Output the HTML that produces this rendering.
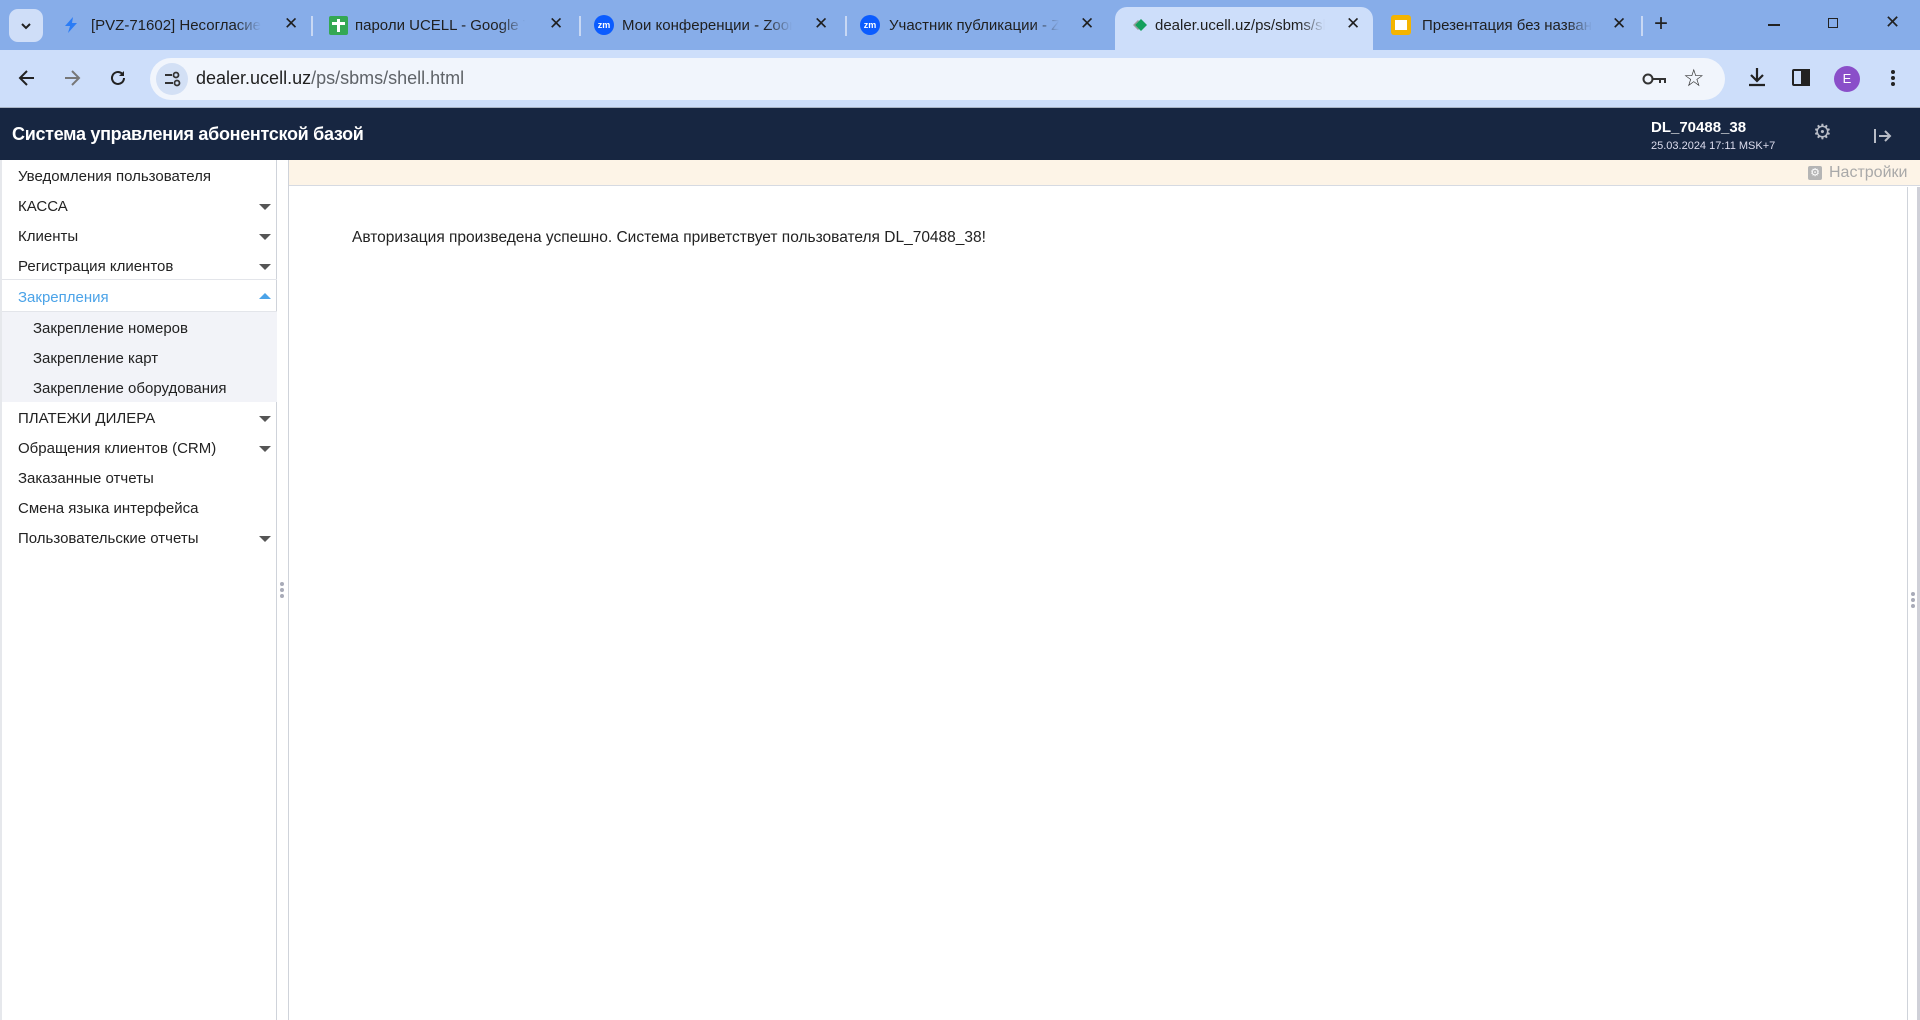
<!DOCTYPE html>
<html><head><meta charset="utf-8">
<style>
*{margin:0;padding:0;box-sizing:border-box}
body{width:1920px;height:1020px;overflow:hidden;background:#fff;font-family:"Liberation Sans","DejaVu Sans",sans-serif;position:relative}
.abs{position:absolute}
#tabbar{left:0;top:0;width:1920px;height:50px;background:#87ade9}
.tab{position:absolute;top:0;height:50px;font-size:15px;color:#1f1f1f;white-space:nowrap}
.tab .t{position:absolute;top:17px;overflow:hidden;width:170px;-webkit-mask-image:linear-gradient(90deg,#000 85%,transparent)}
.tab .x{position:absolute;top:14px;font-size:17px}
.sep{position:absolute;top:16px;width:2px;height:20px;background:#c8d8f4}
#toolbar{left:0;top:50px;width:1920px;height:57px;background:#cddefa}
#addr{left:150px;top:58px;width:1575px;height:42px;border-radius:21px;background:#f1f5fc}
#hdr{left:0;top:108px;width:1920px;height:52px;background:#172641;color:#fff}
#side{left:0;top:160px;width:277px;height:860px;border-right:1px solid #cfd3da;border-left:2px solid #e6e8ec}
.it{position:absolute;left:16px;font-size:15px;color:#222}
.ar{position:absolute;left:257px;width:0;height:0;border-left:6px solid transparent;border-right:6px solid transparent;border-top:6px solid #555}
</style></head><body>
<div id="tabbar" class="abs"></div>
<div class="abs" style="left:9px;top:9px;width:34px;height:33px;border-radius:9px;background:#cfdef8"></div>
<svg class="abs" style="left:19px;top:19px" width="14" height="14"><path d="M3 5l4 4 4-4" stroke="#222" stroke-width="2" fill="none"/></svg>

<div class="tab" style="left:60px;width:250px">
<svg class="abs" style="left:2px;top:16px" width="18" height="18"><path d="M11 1L3 10h5l-2 7 9-10h-5z" fill="#2a7cf6"/></svg>
<span class="t" style="left:31px">[PVZ-71602] Несогласие с</span><span class="x" style="left:224px">✕</span></div>
<div class="sep" style="left:311px"></div>
<div class="tab" style="left:327px;width:250px">
<div class="abs" style="left:2px;top:16px;width:19px;height:19px;background:#34a853;border-radius:2px"></div>
<div class="abs" style="left:10px;top:19px;width:3px;height:13px;background:#fff"></div><div class="abs" style="left:5px;top:22px;width:13px;height:3px;background:#fff"></div>
<span class="t" style="left:28px">пароли UCELL - Google Та</span><span class="x" style="left:222px">✕</span></div>
<div class="sep" style="left:579px"></div>
<div class="tab" style="left:592px;width:250px">
<div class="abs" style="left:2px;top:15px;width:20px;height:20px;border-radius:50%;background:#0b5cff;color:#fff;font-size:9px;font-weight:bold;text-align:center;line-height:20px">zm</div>
<span class="t" style="left:30px">Мои конференции - Zoom</span><span class="x" style="left:222px">✕</span></div>
<div class="sep" style="left:845px"></div>
<div class="tab" style="left:858px;width:250px">
<div class="abs" style="left:2px;top:15px;width:20px;height:20px;border-radius:50%;background:#0b5cff;color:#fff;font-size:9px;font-weight:bold;text-align:center;line-height:20px">zm</div>
<span class="t" style="left:31px">Участник публикации - Zc</span><span class="x" style="left:222px">✕</span></div>
<div class="abs" style="left:1115px;top:7px;width:258px;height:43px;background:#cddefa;border-radius:12px 12px 0 0"></div>
<div class="tab" style="left:1126px;width:250px">
<svg class="abs" style="left:2px;top:17px" width="20" height="16"><path d="M5 8l5-5 1 1-4 4 4 4-1 1z" fill="#999"/><path d="M13 2l6 6-6 6-6-6z" fill="#14a05c"/></svg>
<span class="t" style="left:29px">dealer.ucell.uz/ps/sbms/she</span><span class="x" style="left:220px">✕</span></div>
<div class="tab" style="left:1390px;width:250px">
<div class="abs" style="left:1px;top:15px;width:20px;height:20px;background:#f4b400;border-radius:3px"></div>
<div class="abs" style="left:5px;top:20px;width:12px;height:10px;background:#fff"></div>
<span class="t" style="left:32px">Презентация без названи</span><span class="x" style="left:222px">✕</span></div>
<div class="sep" style="left:1641px"></div>
<div class="abs" style="left:1654px;top:10px;font-size:24px;color:#222">+</div>
<div class="abs" style="left:1768px;top:24px;width:12px;height:1.5px;background:#222"></div>
<div class="abs" style="left:1828px;top:18px;width:10px;height:10px;border:1.5px solid #222"></div>
<div class="abs" style="left:1885px;top:12px;font-size:18px;color:#222">✕</div>

<div id="toolbar" class="abs"></div>
<div class="abs" style="left:0;top:107px;width:1920px;height:1px;background:#a9b4c4"></div>
<svg class="abs" style="left:17px;top:68px" width="20" height="20"><path d="M17 10H4M10 3l-7 7 7 7" stroke="#222" stroke-width="2" fill="none"/></svg>
<svg class="abs" style="left:62px;top:68px" width="20" height="20"><path d="M3 10h13M10 3l7 7-7 7" stroke="#777" stroke-width="2" fill="none"/></svg>
<svg class="abs" style="left:108px;top:68px" width="20" height="20"><path d="M16 10a6 6 0 1 1-2-4.5" stroke="#222" stroke-width="2" fill="none"/><path d="M16 3v5h-5z" fill="#222"/></svg>
<div id="addr" class="abs"></div>
<div class="abs" style="left:156px;top:63px;width:32px;height:32px;border-radius:50%;background:#d3e0f5"></div>
<svg class="abs" style="left:163px;top:70px" width="18" height="18"><path d="M2 5h7M2 13h8" stroke="#333" stroke-width="2"/><circle cx="13" cy="5" r="2.5" fill="none" stroke="#333" stroke-width="1.8"/><circle cx="14" cy="13" r="2.5" fill="none" stroke="#333" stroke-width="1.8"/></svg>
<div class="abs" style="left:196px;top:68px;font-size:18px;color:#1f1f1f">dealer.ucell.uz<span style="color:#5f6368">/ps/sbms/shell.html</span></div>
<svg class="abs" style="left:1642px;top:70px" width="26" height="18"><circle cx="6" cy="9" r="4.5" fill="none" stroke="#333" stroke-width="2"/><path d="M10 9h13v4M18 9v4" stroke="#333" stroke-width="2" fill="none"/></svg>
<div class="abs" style="left:1683px;top:64px;font-size:24px;color:#333">☆</div>
<svg class="abs" style="left:1746px;top:66px" width="22" height="22"><path d="M11 2v12M5 9l6 6 6-6M3 19h16" stroke="#222" stroke-width="2.2" fill="none"/></svg>
<div class="abs" style="left:1792px;top:69px;width:18px;height:17px;border:2px solid #222;border-radius:2px"></div>
<div class="abs" style="left:1801px;top:69px;width:9px;height:17px;background:#222"></div>
<div class="abs" style="left:1834px;top:66px;width:26px;height:26px;border-radius:50%;background:#8a4fc9;color:#fff;font-size:13px;text-align:center;line-height:26px">E</div>
<div class="abs" style="left:1891px;top:70px;width:4px;height:4px;border-radius:50%;background:#222;box-shadow:0 6px 0 #222,0 12px 0 #222"></div>

<div id="hdr" class="abs">
<div class="abs" style="left:12px;top:16px;font-size:18px;font-weight:bold;letter-spacing:-.3px">Система управления абонентской базой</div>
<div class="abs" style="left:1651px;top:11px;font-size:15px;font-weight:bold">DL_70488_38</div>
<div class="abs" style="left:1651px;top:32px;font-size:11px;color:#dde">25.03.2024 17:11 MSK+7</div>
<div class="abs" style="left:1813px;top:12px;font-size:21px;color:#b8bcc6">⚙</div>
<svg class="abs" style="left:1873px;top:20px" width="20" height="16"><path d="M2 1v14" stroke="#b8bcc6" stroke-width="2"/><path d="M6 8h11M12 3l5 5-5 5" stroke="#b8bcc6" stroke-width="2" fill="none"/></svg>
</div>

<div id="side" class="abs">
<div class="abs" style="left:0;top:119px;width:275px;height:1px;background:#e3e5ea"></div>
<div class="abs" style="left:0;top:151px;width:275px;height:91px;background:#f2f3f8;border-top:1px solid #e3e5ea"></div>
<div class="it" style="top:8px">Уведомления пользователя</div>
<div class="it" style="top:38px">КАССА</div><div class="ar" style="top:44px"></div>
<div class="it" style="top:68px">Клиенты</div><div class="ar" style="top:74px"></div>
<div class="it" style="top:98px">Регистрация клиентов</div><div class="ar" style="top:104px"></div>
<div class="it" style="top:129px;color:#4ba3e8">Закрепления</div><div class="ar" style="top:133px;border-top:0;border-bottom:6px solid #4ba3e8"></div>
<div class="it" style="top:160px;left:31px">Закрепление номеров</div>
<div class="it" style="top:190px;left:31px">Закрепление карт</div>
<div class="it" style="top:220px;left:31px">Закрепление оборудования</div>
<div class="it" style="top:250px">ПЛАТЕЖИ ДИЛЕРА</div><div class="ar" style="top:256px"></div>
<div class="it" style="top:280px">Обращения клиентов (CRM)</div><div class="ar" style="top:286px"></div>
<div class="it" style="top:310px">Заказанные отчеты</div>
<div class="it" style="top:340px">Смена языка интерфейса</div>
<div class="it" style="top:370px">Пользовательские отчеты</div><div class="ar" style="top:376px"></div>
</div>
<div class="abs" style="left:288px;top:160px;width:1px;height:860px;background:#cfd3da"></div>
<div class="abs" style="left:280px;top:582px;width:4px;height:4px;border-radius:50%;background:#a8abb8;box-shadow:0 6px 0 #a8abb8,0 12px 0 #a8abb8"></div>
<div class="abs" style="left:289px;top:160px;width:1631px;height:26px;background:#fdf4e7;border-bottom:1px solid #d6dae2"></div>
<div class="abs" style="left:1808px;top:166px;width:14px;height:14px;background:#b5b5b5;border-radius:2px;color:#fff;font-size:11px;line-height:14px;text-align:center">⚙</div>
<div class="abs" style="left:1829px;top:164px;font-size:16px;color:#a9a9a9">Настройки</div>
<div class="abs" style="left:1907px;top:187px;width:1px;height:833px;background:#cfd3da"></div>
<div class="abs" style="left:1917px;top:187px;width:3px;height:833px;background:#cfd0d8"></div>
<div class="abs" style="left:1911px;top:592px;width:4px;height:4px;border-radius:50%;background:#a8abb8;box-shadow:0 6px 0 #a8abb8,0 12px 0 #a8abb8"></div>
<div class="abs" style="left:352px;top:229px;font-size:15.5px;color:#222">Авторизация произведена успешно. Система приветствует пользователя DL_70488_38!</div>
</body></html>
